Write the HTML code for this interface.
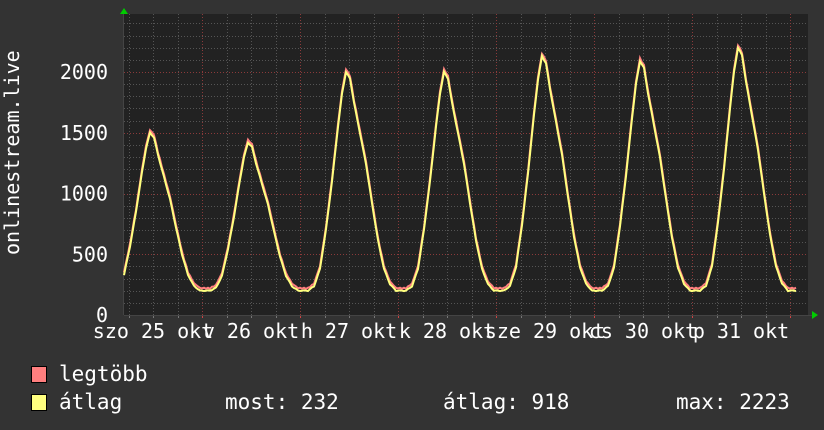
<!DOCTYPE html>
<html><head><meta charset="utf-8"><style>
html,body{margin:0;padding:0;background:#333333;}
body{width:824px;height:430px;overflow:hidden;position:relative;font-family:"DejaVu Sans Mono","Liberation Mono",monospace;color:#fff;}
.t{position:absolute;white-space:pre;font-size:21px;line-height:20px;}
.sq{position:absolute;width:14px;height:15px;border:1px solid #000;}
</style></head><body>
<svg id="g" width="824" height="430" style="position:absolute;left:0;top:0"></svg>
<div class="t" style="left:-78px;top:155px;transform:rotate(-90deg);width:180px;text-align:center;font-size:20px">onlinestream.live</div>
<div class="sq" style="left:31px;top:366px;background:#ff7f7f"></div>
<div class="t" style="left:59px;top:364px">legtöbb</div>
<div class="sq" style="left:31px;top:394px;background:#ffff7f"></div>
<div class="t" style="left:59px;top:392px">átlag</div>
<div class="t" style="left:225px;top:392px">most: 232</div>
<div class="t" style="left:443px;top:392px">átlag: 918</div>
<div class="t" style="left:676px;top:392px">max: 2223</div>
<script>
var s='';var L=124,R=808,T=14,B=315;
function y(v){return B-v*(243/2000);}
s+='<rect x="0" y="0" width="824" height="430" fill="#333"/>';
s+='<rect x="'+L+'" y="'+T+'" width="'+(R-L)+'" height="'+(B-T)+'" fill="#222"/>';
for(var v=100;v<2500;v+=100){var yy=Math.round(y(v))+.5;if(yy<T)break;
 s+='<line x1="'+L+'" x2="'+R+'" y1="'+yy+'" y2="'+yy+'" stroke="'+(v%500?'#555':'#8a3a3a')+'" stroke-dasharray="1,2"/>';}
for(var x=104+24.5;x<R;x+=24.5){var xx=Math.round(x)+.5;if(xx<=L)continue;var day=Math.abs(((x-104)/98)-Math.round((x-104)/98))<0.01;
 s+='<line y1="'+T+'" y2="'+B+'" x1="'+xx+'" x2="'+xx+'" stroke="'+(day?'#8a3a3a':'#555')+'" stroke-dasharray="1,2"/>';
 s+='<line y1="'+B+'" y2="'+(B+3)+'" x1="'+xx+'" x2="'+xx+'" stroke="'+(day?'#c44':'#777')+'"/>';}
s+='<line x1="'+L+'" x2="'+(R+6)+'" y1="'+(B+.5)+'" y2="'+(B+.5)+'" stroke="#444"/>';
s+='<line x1="'+(L-.5)+'" x2="'+(L-.5)+'" y1="'+(T-4)+'" y2="'+B+'" stroke="#444"/>';
s+='<polygon points="120,14 128,14 124,8" fill="#0c0"/><polygon points="812,311 812,319 818,315" fill="#0c0"/>';
for(var v=0;v<=2000;v+=500)s+='<text x="108" y="'+(y(v)+7)+'" fill="#fff" font-size="20" text-anchor="end" font-family="DejaVu Sans Mono,monospace">'+v+'</text>';
var labs=['szo 25 okt','v 26 okt','h 27 okt','k 28 okt','sze 29 okt','cs 30 okt','p 31 okt'];
for(var i=0;i<7;i++)s+='<text x="'+(153+98*i)+'" y="338" fill="#fff" font-size="20" text-anchor="middle" font-family="DejaVu Sans Mono,monospace">'+labs[i]+'</text>';
var tp=[[0,0],[6,.02],[12,.1],[18,.28],[24,.5],[30,.75],[34,.9],[38,1],[42,.97],[46,.86],[52,.72],[58,.58],[64,.4],[70,.23],[76,.1],[82,.03],[88,0],[98,0]];
var pk=[1500,1420,2000,2000,2130,2090,2200];
var pts=[];
for(var i=-1;i<7;i++){var P=pk[Math.max(i,0)];var x0=112+98*i;for(var j=0;j<tp.length-1;j++){var a=tp[j],b=tp[j+1];for(var d=a[0];d<b[0];d+=2){var f=a[1]+(b[1]-a[1])*(d-a[0])/(b[0]-a[0]);pts.push([x0+d,200+(P-200)*f]);}}}
var pr='',py='';
for(var k=0;k<pts.length;k++){var p=pts[k];if(p[0]<L||p[0]>R)continue;var n=Math.sin(k*1.7)*10;
 pr+=p[0]+','+y(p[1]+15+Math.abs(n)).toFixed(1)+' ';py+=p[0]+','+y(p[1]+n*0.3).toFixed(1)+' ';}
s+='<polyline points="'+pr+'" fill="none" stroke="#ff7f7f" stroke-width="2"/>';
s+='<polyline points="'+py+'" fill="none" stroke="#ffff7f" stroke-width="2"/>';
document.getElementById('g').innerHTML=s;
</script>
</body></html>
